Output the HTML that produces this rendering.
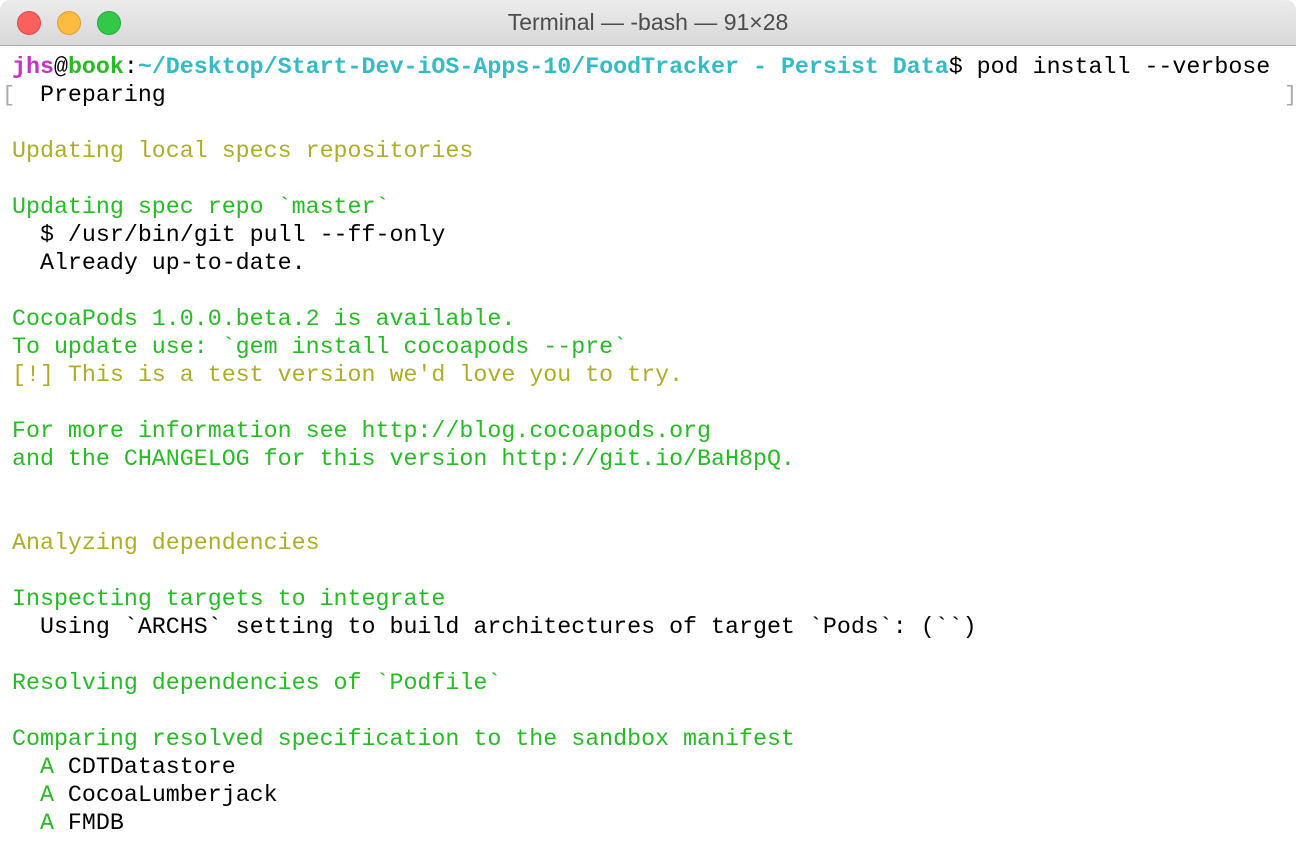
<!DOCTYPE html>
<html><head><style>
body{margin:0;width:1296px;height:846px;overflow:hidden;background:#fff;}
.win{position:absolute;left:0;top:0;width:1296px;height:846px;border-radius:10px 10px 0 0;overflow:hidden;}
.tb{position:absolute;left:0;top:0;width:1296px;height:45px;background:linear-gradient(#ececec,#d8d8d8);border-bottom:1px solid #a8a8a8;}
.tl{position:absolute;top:11px;width:24px;height:24px;border-radius:50%;box-sizing:border-box;}
.title{position:absolute;left:0;right:0;top:9px;text-align:center;font:23px "Liberation Sans",sans-serif;color:#4c4c4c;}
pre{position:absolute;left:12px;top:53px;margin:0;font:23.3px/28px "Liberation Mono",monospace;color:#000;}
.m{color:#c930c7;font-weight:bold}.g{color:#25bc24}.gb{color:#25bc24;font-weight:bold}.c{color:#33bbc8;font-weight:bold}.y{color:#adad27}
.br{position:absolute;top:83px;font:22px "Liberation Mono",monospace;color:#aaa;}
</style></head><body><div class="win">
<div class="tb">
<div class="tl" style="left:17px;background:#fc605c;border:1px solid #de4a45"></div>
<div class="tl" style="left:57px;background:#fdbc40;border:1px solid #dd9d2b"></div>
<div class="tl" style="left:97px;background:#34c84a;border:1px solid #25a838"></div>
<div class="title">Terminal — -bash — 91×28</div>
</div>
<div class="br" style="left:2px">[</div><div class="br" style="left:1284px">]</div>
<pre><span class="m">jhs</span>@<span class="gb">book</span>:<span class="c">~/Desktop/Start-Dev-iOS-Apps-10/FoodTracker - Persist Data</span>$ pod install --verbose
  Preparing

<span class="y">Updating local specs repositories</span>

<span class="g">Updating spec repo `master`</span>
  $ /usr/bin/git pull --ff-only
  Already up-to-date.

<span class="g">CocoaPods 1.0.0.beta.2 is available.
To update use: `gem install cocoapods --pre`</span>
<span class="y">[!] This is a test version we'd love you to try.</span>

<span class="g">For more information see http://blog.cocoapods.org
and the CHANGELOG for this version http://git.io/BaH8pQ.</span>


<span class="y">Analyzing dependencies</span>

<span class="g">Inspecting targets to integrate</span>
  Using `ARCHS` setting to build architectures of target `Pods`: (``)

<span class="g">Resolving dependencies of `Podfile`</span>

<span class="g">Comparing resolved specification to the sandbox manifest</span>
  <span class="g">A</span> CDTDatastore
  <span class="g">A</span> CocoaLumberjack
  <span class="g">A</span> FMDB</pre>
</div></body></html>
